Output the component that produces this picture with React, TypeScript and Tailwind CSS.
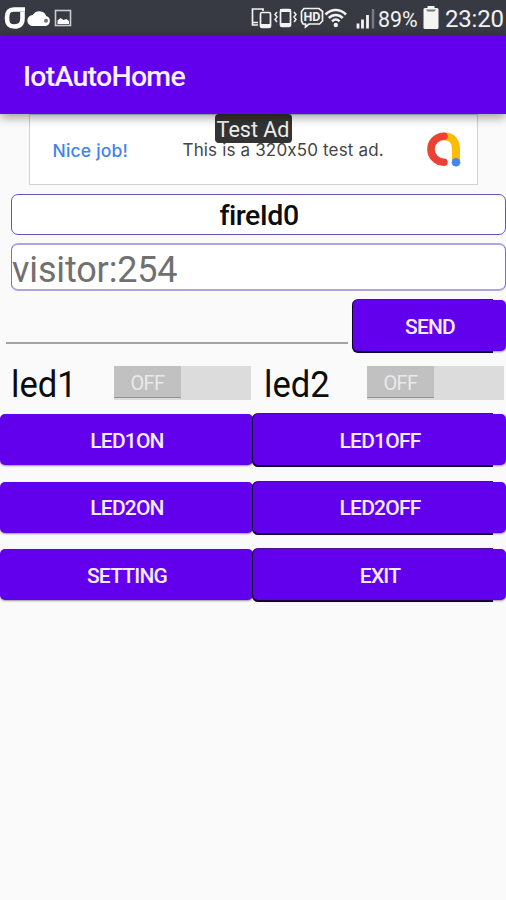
import React from "react";

function StatusBar() {
  return (
    <header className="flex h-9 shrink-0 items-center bg-[#373a43] text-[#f2f2f2]">
      <svg width="80" height="36" viewBox="0 0 80 36" fill="none">
        <path d="M25 9.500H14C8.500 9.500 7 12.500 7 18s1.500 8.500 7.500 8.500 8-3 8-8.500V12" stroke="#fff" strokeWidth="4.600" />
        <rect x="12.500" y="13.500" width="5.500" height="8.500" rx="2.500" fill="#373a43" />
        <path d="M33 26a5.500 5.500 0 0 1-.3-11 7.500 7.500 0 0 1 13.500 1A5.200 5.200 0 0 1 46 26Z" fill="#fff" />
        <circle cx="46" cy="20.800" r="2" fill="#70737b" />
        <rect x="55.500" y="10.500" width="15" height="15" stroke="#c9cbd0" strokeWidth="1.600" />
        <path d="M57.500 24v-3.500l3-2.500 3 2 3-1 2.500 2V24Z" fill="#fff" />
      </svg>
      <div className="flex-1" />
      <svg width="138" height="36" viewBox="240 0 138 36" fill="none" stroke="#f2f2f2">
        <path d="M258 25h-5.500V9H263v2M253 22.500h5" strokeWidth="1.700" />
        <rect x="260.500" y="12.500" width="10" height="15" rx="1.500" strokeWidth="1.700" />
        <path d="M260.500 25.500h10" strokeWidth="3" />
        <rect x="280.500" y="9.500" width="10" height="17" rx="1.500" strokeWidth="1.700" />
        <path d="M280 10.500h11M280 24.500h11" strokeWidth="3" />
        <path d="m277 12-2 2.500 2 2.500-2 2.500 2 2.500M294 12l2 2.500-2 2.500 2 2.500-2 2.500" strokeWidth="1.500" />
        <path d="M304 8.500h15l3.500 3v9.500l-3 3H309l-3.500 3v-3H303l-1.500-3v-9.500Z" strokeWidth="1.700" />
        <text x="312" y="21" textAnchor="middle" textLength="17" lengthAdjust="spacingAndGlyphs" fill="#f2f2f2" stroke="none" fontSize="13.500" fontWeight="700">HD</text>
        <path d="M325.500 14.500c6-6 14.500-6 20.500 0M328.800 18c4-4 10-4 14 0M332 21.300c2.300-2.200 5.300-2.200 7.600 0" strokeWidth="2.500" />
        <circle cx="335.800" cy="25" r="2.200" fill="#f2f2f2" stroke="none" />
        <path d="M358 23.500v5M362.500 19.500v9M367.500 15v13.500" strokeWidth="2.800" />
        <path d="M373 9v19.500" stroke="#777a82" strokeWidth="2.500" />
      </svg>
      <div className="flex w-[43px] justify-start pt-[2px]">
        <span className="origin-left scale-x-[0.950] text-[22.5px] leading-9">89%</span>
      </div>
      <svg className="shrink-0" width="22" height="36" viewBox="0 0 22 36">
        <rect x="2.500" y="8" width="15" height="21" rx="1.500" fill="#f4f4f2" />
        <rect x="6.500" y="6" width="7" height="3" fill="#f4f4f2" />
        <path d="M5 9.500h10l-1.500 2h-7Z" fill="#75777c" />
      </svg>
      <span className="w-[63px] whitespace-nowrap pl-[2px] pt-[2px] text-[24px] leading-9 tracking-[-0.2px]">23:20</span>
    </header>
  );
}

function AdBanner() {
  return (
    <section className="relative mx-auto flex h-[71px] w-[449px] shrink-0 items-center border border-[#cdd1d3] bg-white pt-[3px] font-[Inter,sans-serif] text-[17px]">
      <span className="ml-[23px] w-[130px] whitespace-nowrap text-[17.5px] font-medium tracking-[0.2px] text-[#3f83ec]">Nice job!</span>
      <span className="whitespace-nowrap tracking-[0.16px] text-[#454545]">This is a 320x50 test ad.</span>
      <svg className="absolute left-[396px] top-[16px]" width="38" height="38" viewBox="0 0 38 38" fill="none" strokeWidth="8">
        <path d="M17.500 5.500c8.500-1 12.500 5 12.500 12.500v12" stroke="#fbbc04" />
        <path d="M18 5.200A13 13 0 0 0 18 31.200" stroke="#ea4335" strokeWidth="7.600" strokeLinecap="round" />
        <circle cx="30" cy="31.200" r="4.300" fill="#4285f4" />
      </svg>
      <span className="absolute left-[185px] -top-px flex h-[29px] w-[77px] items-center justify-center whitespace-nowrap rounded bg-[#333334] pt-[4px] font-[Roboto,sans-serif] text-[21.5px] text-[#eee]">
        Test Ad
      </span>
    </section>
  );
}

function RaisedButton({ label, raised = false }: { label: string; raised?: boolean }) {
  return (
    <div className="relative h-[51px] flex-1">
      {raised && <div className="absolute -bottom-[2px] -left-px -top-px right-[13px] rounded-l-[6px] border-t border-[#4a10a0] bg-[#160036]" />}
      <button className="relative flex h-full w-full items-center justify-center rounded-[5px] bg-[#6200ee] pl-px pt-[3px] shadow-[0_1px_2px_rgba(0,0,0,0.4)]">
        <span className="text-[21px] font-medium leading-none tracking-[-0.8px] text-[#f3ebff]">{label}</span>
      </button>
    </div>
  );
}

function LedToggle({ name }: { name: string }) {
  return (
    <div className="flex flex-1 items-center pl-[11px]">
      <div className="w-[103px]">
        <span className="inline-block origin-left scale-x-[0.960] text-[36px] leading-none text-[#0c0c0c]">{name}</span>
      </div>
      <div className="mt-[-4px] h-[34px] w-[137px] bg-[#dcdcdc]">
        <div className="flex h-[32px] w-[67px] items-center justify-center border-b border-[#929292] bg-[#c1c1c1] pt-[3px] text-[20px] tracking-[-0.6px] text-[#e9e9e9]">
          OFF
        </div>
      </div>
    </div>
  );
}

export default function App() {
  return (
    <main className="flex h-[900px] w-[506px] flex-col overflow-hidden bg-[#fafafa] font-[Roboto,sans-serif]">
      <StatusBar />
      <div className="relative z-10 flex h-[78px] shrink-0 items-center bg-[#6200ee] pl-[23px] pt-[5px] shadow-[0_3px_10px_rgba(0,0,0,0.4)]">
        <h1 className="text-[28.5px] font-medium tracking-[-0.75px] text-[#f7f0ff]">IotAutoHome</h1>
      </div>
      <AdBanner />
      <div className="ml-[11px] mt-[9px] flex h-[41px] shrink-0 items-center justify-center rounded-[7px] border border-[#6853bd] bg-white pl-px pt-[3px] text-[28.5px] font-medium tracking-[-0.5px] text-[#0c0c0c]">
        fireId0
      </div>
      <div className="ml-[11px] mt-[8px] flex h-[48px] shrink-0 items-center rounded-[7px] border-x border-y-2 border-x-[#7f6dca] border-y-[#aea5da] bg-white pt-[5px] text-[36px] tracking-[-0.15px] text-[#707070]">
        visitor:254
      </div>
      <div className="mt-[9px] flex h-[51px] shrink-0">
        <div className="ml-[6px] mr-[5px] h-[44px] w-[342px] border-b-2 border-[#a2a2a2]" />
        <RaisedButton label="SEND" raised />
      </div>
      <div className="mt-[12px] flex h-[44px] shrink-0">
        <LedToggle name="led1" />
        <LedToggle name="led2" />
      </div>
      <div className="mt-[7px] flex shrink-0 flex-col gap-[16.500px]">
        {[["LED1ON", "LED1OFF"], ["LED2ON", "LED2OFF"], ["SETTING", "EXIT"]].map(([a, b]) => (
          <div key={a} className="flex">
            <RaisedButton label={a} />
            <RaisedButton label={b} raised />
          </div>
        ))}
      </div>
    </main>
  );
}
